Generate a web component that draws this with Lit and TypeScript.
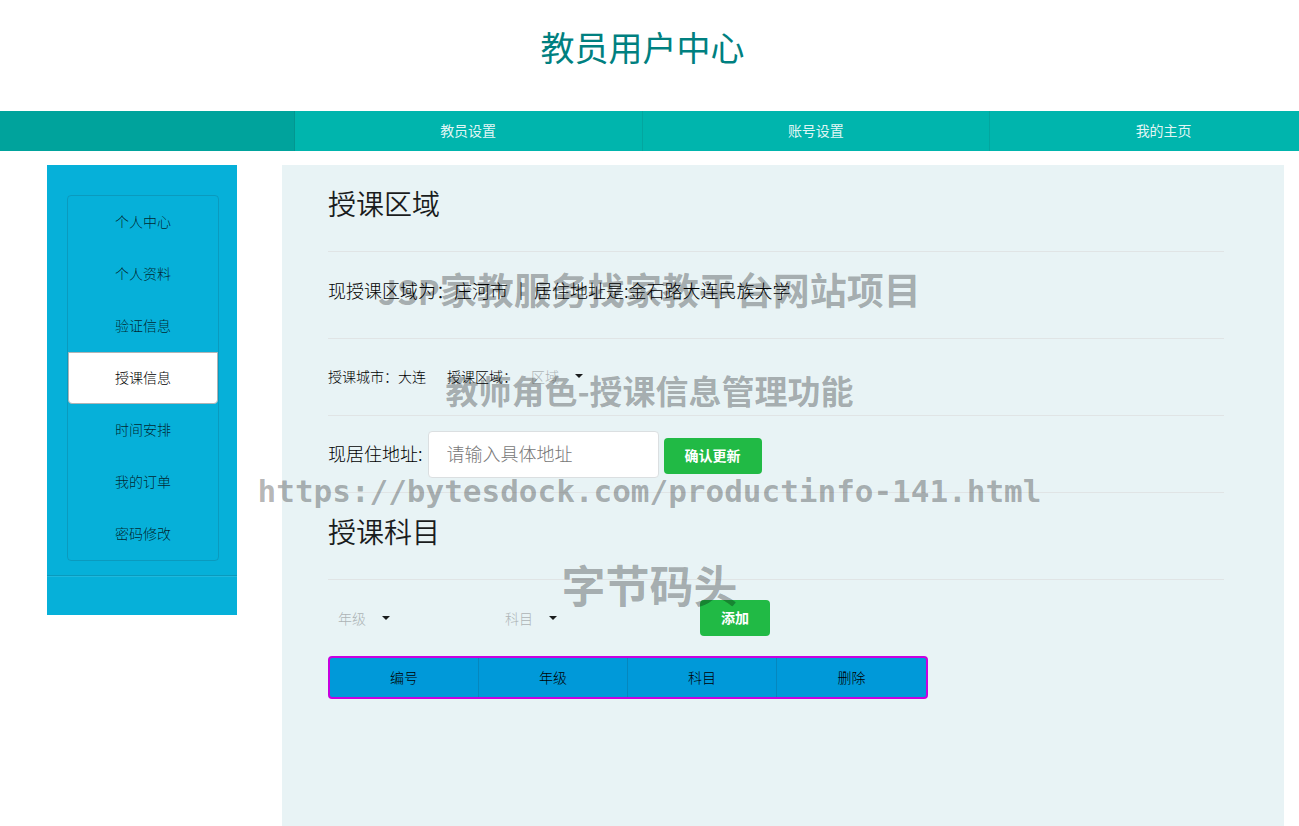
import { LitElement, html, css } from "lit";
import { customElement, property, state } from "lit/decorators.js";
import { classMap } from "lit/directives/class-map.js";

@customElement("plain-select")
class PlainSelect extends LitElement {
  @property() label = "";
  @property() placeholder = "";
  @property({ type: Array }) options: string[] = [];

  static styles = css`
    :host { display: inline-block; }
    .field { display: inline-grid; align-items: center; }
    select {
      grid-area: 1 / 1;
      appearance: none;
      width: 60px;
      height: 20px;
      margin: 0;
      padding: 0;
      border: 0;
      background: transparent;
      color: #adb3b5;
      font: inherit;
      line-height: 20px;
    }
    .caret {
      grid-area: 1 / 1;
      justify-self: end;
      width: 8px;
      height: 4px;
      margin-right: 8px;
      fill: #1a1c1d;
      pointer-events: none;
    }
  `;

  render() {
    return html`
      <span class="field">
        <select aria-label=${this.label}>
          <option value="">${this.placeholder}</option>
          ${this.options.map((o) => html`<option>${o}</option>`)}
        </select>
        <svg class="caret" viewBox="0 0 8 4" aria-hidden="true"><path d="M0 0H8L4 4Z" /></svg>
      </span>
    `;
  }
}

@customElement("app-root")
class AppRoot extends LitElement {
  @state() private current = "授课信息";

  private nav = ["", "教员设置", "账号设置", "我的主页"];
  private menu = ["个人中心", "个人资料", "验证信息", "授课信息", "时间安排", "我的订单", "密码修改"];
  private columns = ["编号", "年级", "科目", "删除"];

  static styles = css`
    :host {
      display: flex;
      flex-direction: column;
      position: relative;
      min-height: 100vh;
      overflow: hidden;
      box-sizing: border-box;
      background: #fff;
      color: #000;
      font-family: "Noto Sans CJK SC", sans-serif;
      font-size: 14px;
      font-weight: 300;
      line-height: 20px;
    }
    *, *::before { box-sizing: border-box; }
    h1, h2, p { margin: 0; font-weight: inherit; }
    a { color: inherit; text-decoration: none; }
    ul { margin: 0; padding: 0; list-style: none; }

    .title {
      padding: 23px 14px 40px 0;
      color: #008080;
      font-size: 34px;
      font-weight: 400;
      line-height: 48px;
      text-align: center;
    }

    .nav { overflow: hidden; background: #00b5ad; }
    .nav ul { display: flex; margin: 0 -39px 0 -53px; }
    .nav li { flex: 1; }
    .nav a {
      display: block;
      height: 40px;
      border-right: 1px solid rgba(34, 36, 38, 0.1);
      color: rgba(255, 255, 255, 0.9);
      font-weight: 400;
      line-height: 38px;
      text-align: center;
    }
    .nav .on { background: #00a39c; }

    .body {
      flex: 1;
      display: flex;
      align-items: flex-start;
      gap: 45px;
      padding: 14px 15px 0 47px;
    }
    .side { flex: 0 0 190px; padding: 30px 0 38px; background: #06b0d9; }
    .menu {
      margin: 0 18px 14px 20px;
      border: 1px solid rgba(34, 36, 38, 0.15);
      border-radius: 4px;
    }
    .menu a {
      display: block;
      height: 52px;
      border: 1px solid transparent;
      color: rgba(0, 0, 0, 0.8);
      line-height: 48px;
      text-align: center;
    }
    .menu .on {
      border-color: #b0b4b6;
      border-radius: 0 0 4px 4px;
      background: #fff;
      color: #000;
    }
    .rule {
      height: 2px;
      margin: 0;
      border: 0;
      border-top: 1px solid rgba(34, 36, 38, 0.15);
      border-bottom: 1px solid rgba(255, 255, 255, 0.1);
    }

    .content {
      flex: 1;
      align-self: stretch;
      padding: 0 60px 0 46px;
      background: #e8f3f5;
    }
    .row { display: flex; align-items: center; border-bottom: 1px solid #e0e4e5; }
    h2.row {
      height: 87px;
      padding-bottom: 10px;
      color: #1a1c1d;
      font-size: 28px;
      font-weight: 350;
      line-height: 40px;
    }
    .current { height: 87px; padding-bottom: 10px; font-size: 18px; line-height: 24px; white-space: pre; }
    .area { height: 77px; padding-bottom: 2px; gap: 21px; }
    .pair { display: flex; gap: 14px; }
    .address { height: 77px; gap: 5px; font-size: 18px; line-height: 24px; }
    .address label { padding-bottom: 2px; }
    .address input {
      width: 231px;
      height: 47px;
      padding: 0 18px 2px;
      border: 1px solid #dbdfe1;
      border-radius: 4px;
      background: #fff;
      color: #000;
      font: inherit;
    }
    .address input::placeholder { color: #777; opacity: 1; }
    button {
      height: 36px;
      padding: 0 21px 2px;
      border: 0;
      border-radius: 4px;
      background: #21ba45;
      color: #fff;
      font: inherit;
      font-size: 14px;
      font-weight: 700;
      line-height: 20px;
    }
    .address button { margin-top: 4px; }
    .add {
      display: grid;
      grid-template-columns: 167px 195px max-content;
      align-items: center;
      padding: 20px 0 20px 10px;
    }
    table {
      width: 600px;
      max-width: 100%;
      border: 2px solid #c800e0;
      border-radius: 4px;
      border-spacing: 0;
      background: #0099d9;
      table-layout: fixed;
    }
    th {
      height: 39px;
      padding: 0 0 2px;
      border-right: 1px solid rgba(34, 36, 38, 0.15);
      font-weight: inherit;
      text-align: center;
    }
    th:last-child { border-right: 0; }

    .watermark {
      position: absolute;
      top: 240px;
      left: 0;
      right: 0;
      display: grid;
      grid-template-rows: 100px 100px 102px 84px;
      place-items: center;
      color: rgba(0, 0, 0, 0.3);
      font-weight: 700;
      white-space: nowrap;
      pointer-events: none;
    }
    .m { font-size: 37px; }
    .s { font-size: 33px; }
    .l { font-size: 44px; }
    .url { font-family: "DejaVu Sans Mono", monospace; font-size: 31px; }
  `;

  render() {
    return html`
      <h1 class="title">教员用户中心</h1>
      <nav class="nav">
        <ul>
          ${this.nav.map((n, i) => html`<li><a href="#" class=${classMap({ on: i === 0 })}>${n}</a></li>`)}
        </ul>
      </nav>
      <div class="body">
        <aside class="side">
          <ul class="menu">
            ${this.menu.map((m) => html`
              <li><a href="#" class=${classMap({ on: m === this.current })}
                @click=${() => { this.current = m; }}>${m}</a></li>`)}
          </ul>
          <hr class="rule" />
        </aside>
        <main class="content">
          <h2 class="row">授课区域</h2>
          <p class="row current">现授课区域为：庄河市 ｜ 居住地址是:金石路大连民族大学</p>
          <div class="row area">
            <span>授课城市：大连</span>
            <span class="pair">授课区域：<plain-select label="授课区域" placeholder="区域" .options=${["庄河市"]}></plain-select></span>
          </div>
          <form class="row address" @submit=${(e: Event) => e.preventDefault()}>
            <label for="address">现居住地址:</label>
            <input id="address" type="text" placeholder="请输入具体地址" />
            <button type="submit">确认更新</button>
          </form>
          <h2 class="row">授课科目</h2>
          <form class="add" @submit=${(e: Event) => e.preventDefault()}>
            <plain-select label="年级" placeholder="年级"></plain-select>
            <plain-select label="科目" placeholder="科目"></plain-select>
            <button type="submit">添加</button>
          </form>
          <table>
            <thead>
              <tr>${this.columns.map((c) => html`<th scope="col">${c}</th>`)}</tr>
            </thead>
          </table>
        </main>
      </div>
      <div class="watermark">
        <span class="m"><span class="s">JSP</span>家教服务找家教平台网站项目</span>
        <span class="s">教师角色-授课信息管理功能</span>
        <span class="url">https://bytesdock.com/productinfo-141.html</span>
        <span class="l">字节码头</span>
      </div>
    `;
  }
}
